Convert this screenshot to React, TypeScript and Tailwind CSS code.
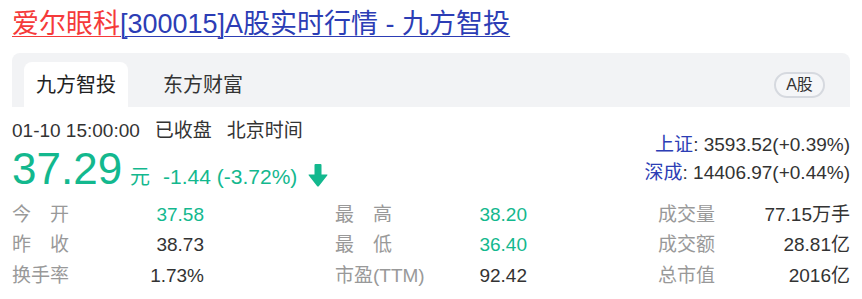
import React from "react";

const font = { fontFamily: '"Liberation Sans", Arial, "Noto Sans CJK SC", sans-serif' };

const stats = [
  [
    { label: "今　开", value: "37.58", green: true },
    { label: "最　高", value: "38.20", green: true },
    { label: "成交量", value: "77.15万手" },
  ],
  [
    { label: "昨　收", value: "38.73" },
    { label: "最　低", value: "36.40", green: true },
    { label: "成交额", value: "28.81亿" },
  ],
  [
    { label: "换手率", value: "1.73%" },
    { label: "市盈(TTM)", value: "92.42" },
    { label: "总市值", value: "2016亿" },
  ],
];

function ArrowDown() {
  return (
    <svg width="20" height="23" viewBox="0 0 20 23" className="ml-[11px] translate-y-[3px]">
      <rect x="6.5" y="0" width="7" height="12" rx="1" fill="#13b88e" />
      <path d="M1 10.5 Q0 10.5 0.8 11.5 L9.2 22.2 Q10 23 10.8 22.2 L19.2 11.5 Q20 10.5 19 10.5 Z" fill="#13b88e" />
    </svg>
  );
}

export default function App() {
  return (
    <div className="w-[862px] h-[299px] bg-white px-3 overflow-hidden text-[#333]" style={font}>
      {/* Title */}
      <h1 className="pt-[6px] text-[27px] leading-[36px] font-normal">
        <a className="text-[#f53a3a] underline underline-offset-[3px] decoration-1">爱尔眼科</a>
        <a className="text-[#2c3db5] underline underline-offset-[3px] decoration-1">[300015]A股实时行情 - 九方智投</a>
      </h1>

      {/* Tabs */}
      <div className="mt-[11px] h-[54px] bg-[#f2f3f5] rounded-t-lg flex items-end pl-3 pr-[25px]">
        <div className="h-[45px] w-[104px] bg-white rounded-t-lg flex items-center justify-center text-[20px] text-[#222]">
          九方智投
        </div>
        <div className="h-[45px] ml-[23px] px-3 flex items-center text-[20px] text-[#333]">东方财富</div>
        <div className="ml-auto self-center mt-[9px] h-[26px] w-[51px] rounded-full border-2 border-[#d6d9df] bg-[#f5f6f8] flex items-center justify-center text-[16px] text-[#333]">
          A股
        </div>
      </div>

      {/* Quote */}
      <div className="flex justify-between items-start">
        <div>
          <div className="mt-3 text-[19px] leading-[24px] text-[#333] flex">
            <span>01-10 15:00:00</span>
            <span className="ml-[15px]">已收盘</span>
            <span className="ml-[15px]">北京时间</span>
          </div>
          <div className="mt-1 flex items-baseline text-[#13b88e]">
            <span className="text-[44px] leading-[44px]">37.29</span>
            <span className="ml-2 text-[20px]">元</span>
            <span className="ml-[13px] text-[21px]">-1.44 (-3.72%)</span>
            <ArrowDown />
          </div>
        </div>
        <div className="mt-6 text-[19px] leading-[28px] text-right">
          <div>
            <a className="text-[#2c3db5]">上证</a>: 3593.52(+0.39%)
          </div>
          <div>
            <a className="text-[#2c3db5]">深成</a>: 14406.97(+0.44%)
          </div>
        </div>
      </div>

      {/* Stats */}
      <div className="mt-[7px] text-[19px] leading-[30.5px]">
        {stats.map((row, i) => (
          <div key={i} className="flex justify-between">
            {row.map((c) => (
              <div key={c.label} className="w-[192px] flex justify-between">
                <span className="text-[#999]">{c.label}</span>
                <span className={c.green ? "text-[#13b88e]" : "text-[#333]"}>{c.value}</span>
              </div>
            ))}
          </div>
        ))}
      </div>
    </div>
  );
}
